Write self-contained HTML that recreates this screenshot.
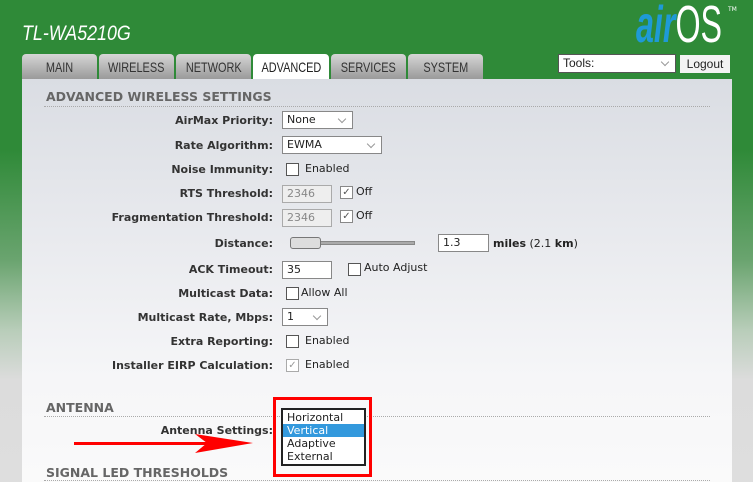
<!DOCTYPE html>
<html><head><style>
*{margin:0;padding:0;box-sizing:border-box}
body{width:753px;height:482px;overflow:hidden;position:relative;font-family:"DejaVu Sans","Liberation Sans",sans-serif;font-size:11px;color:#222;
background:linear-gradient(#2f8a38 0px,#2f8a38 150px,#6aa46f 260px,#b8cdb9 330px,#dcdcdc 380px,#dedede 482px)}
.a{position:absolute;white-space:nowrap}
.title{left:22px;top:22px;color:#fff;font-family:"Liberation Sans",sans-serif;font-style:italic;font-size:21px;transform:scaleX(.85);transform-origin:left}
.tab{position:absolute;top:54px;height:25px;background:linear-gradient(#d6d6d6,#9a9a9a);border-radius:4px 4px 0 0;color:#333;font-family:"Liberation Sans",sans-serif;font-size:14px;text-align:center;line-height:27px}
.tab span{display:inline-block;transform:scaleX(.78)}
.tab.on{background:#fff;height:26px;color:#222}
.panel{position:absolute;left:22px;top:79px;width:710px;height:403px;background:linear-gradient(#dadde3,#f6f6f8 300px,#fafafa)}
.h{font-weight:bold;color:#666;font-size:12.5px}
.line{position:absolute;height:1px;border-top:1px dotted #aaa}
.lbl{position:absolute;right:480px;font-weight:bold;color:#333;font-size:11px;white-space:nowrap}
.box{position:absolute;border:1px solid #888;background:#fff;height:18px;font-size:11px;line-height:16px;padding-left:4px}
.dis{background:#eee;color:#888;border-color:#aaa}
.cb{position:absolute;width:13px;height:13px;border:1px solid #555;background:#fff}
.cbc{border-color:#888;font-size:10px;line-height:11px;text-align:center;color:#555}
.t{position:absolute;font-size:11px;white-space:nowrap}
.dd::after{content:"";position:absolute;right:7px;top:4px;width:5px;height:5px;border-right:1px solid #999;border-bottom:1px solid #999;transform:rotate(45deg)}
</style></head><body>
<div class="a title">TL-WA5210G</div>
<div class="a" style="left:636px;top:0px;font-family:'Liberation Sans',sans-serif;font-size:52px;transform:scaleX(.62);transform-origin:left;line-height:50px"><span style="color:#1e9ad6;font-style:italic;font-weight:bold">air</span><span style="color:#fff">OS</span></div>
<div class="a" style="left:728px;top:6px;color:#fff;font-size:6px">TM</div>
<div class="tab" style="left:22px;width:75px"><span>MAIN</span></div>
<div class="tab" style="left:99px;width:75px"><span>WIRELESS</span></div>
<div class="tab" style="left:176px;width:75px"><span>NETWORK</span></div>
<div class="tab on" style="left:253px;width:76px"><span>ADVANCED</span></div>
<div class="tab" style="left:331px;width:75px"><span>SERVICES</span></div>
<div class="tab" style="left:408px;width:75px"><span>SYSTEM</span></div>
<div class="box dd" style="left:558px;top:54px;width:118px;height:19px;border-color:#555;font-family:'Liberation Sans';font-size:12px">Tools:</div>
<div class="a" style="left:680px;top:55px;width:50px;height:18px;background:#f3f3f3;font-family:'Liberation Sans';font-size:12px;text-align:center;line-height:18px">Logout</div>
<div class="panel"></div>
<div class="a h" style="left:46px;top:89px">ADVANCED WIRELESS SETTINGS</div>
<div class="line" style="left:44px;top:106px;width:666px"></div>
<div class="lbl" style="top:114px">AirMax Priority:</div>
<div class="box dd" style="left:282px;top:111px;width:71px">None</div>
<div class="lbl" style="top:139px">Rate Algorithm:</div>
<div class="box dd" style="left:282px;top:136px;width:100px">EWMA</div>
<div class="lbl" style="top:163px">Noise Immunity:</div>
<div class="cb" style="left:286px;top:163px"></div><div class="t" style="left:305px;top:162px">Enabled</div>
<div class="lbl" style="top:187px">RTS Threshold:</div>
<div class="box dis" style="left:282px;top:185px;width:50px">2346</div>
<div class="cb cbc" style="left:340px;top:186px">✓</div><div class="t" style="left:356px;top:185px">Off</div>
<div class="lbl" style="top:211px">Fragmentation Threshold:</div>
<div class="box dis" style="left:282px;top:209px;width:50px">2346</div>
<div class="cb cbc" style="left:340px;top:210px">✓</div><div class="t" style="left:356px;top:209px">Off</div>
<div class="lbl" style="top:237px">Distance:</div>
<div class="a" style="left:300px;top:241px;width:115px;height:4px;background:#aaa;border:1px solid #888"></div>
<div class="a" style="left:290px;top:237px;width:31px;height:12px;background:#ddd;border:1px solid #777;border-radius:3px"></div>
<div class="box" style="left:438px;top:234px;width:51px">1.3</div>
<div class="t" style="left:493px;top:237px"><b>miles</b> (2.1 <b>km</b>)</div>
<div class="lbl" style="top:263px">ACK Timeout:</div>
<div class="box" style="left:282px;top:261px;width:50px">35</div>
<div class="cb" style="left:348px;top:263px"></div><div class="t" style="left:364px;top:261px">Auto Adjust</div>
<div class="lbl" style="top:287px">Multicast Data:</div>
<div class="cb" style="left:286px;top:287px"></div><div class="t" style="left:301px;top:286px">Allow All</div>
<div class="lbl" style="top:311px">Multicast Rate, Mbps:</div>
<div class="box dd" style="left:282px;top:308px;width:46px">1</div>
<div class="lbl" style="top:335px">Extra Reporting:</div>
<div class="cb" style="left:286px;top:335px"></div><div class="t" style="left:305px;top:334px">Enabled</div>
<div class="lbl" style="top:359px">Installer EIRP Calculation:</div>
<div class="cb cbc" style="left:286px;top:359px;border-color:#aaa;color:#999">✓</div><div class="t" style="left:305px;top:358px">Enabled</div>
<div class="a h" style="left:46px;top:400px">ANTENNA</div>
<div class="line" style="left:44px;top:416px;width:666px"></div>
<div class="lbl" style="top:424px">Antenna Settings:</div>
<div class="a" style="left:74px;top:442px;width:140px;height:3px;background:#f00"></div>
<svg class="a" style="left:195px;top:434px" width="60" height="20"><path d="M0 0 L58 9 L0 19 L12 9Z" fill="#f00"/></svg>
<div class="a h" style="left:46px;top:465px">SIGNAL LED THRESHOLDS</div>
<div class="line" style="left:44px;top:480px;width:666px"></div>
<div class="a" style="left:273px;top:397px;width:99px;height:80px;border:3px solid #f00"></div>
<div class="a" style="left:281px;top:408px;width:85px;height:58px;border:2px solid #222;background:#fff;font-size:11px;line-height:13px;padding-top:1px">
<div style="padding-left:4px">Horizontal</div>
<div style="padding-left:4px;background:#3399dd;color:#fff">Vertical</div>
<div style="padding-left:4px">Adaptive</div>
<div style="padding-left:4px">External</div></div>
</body></html>
